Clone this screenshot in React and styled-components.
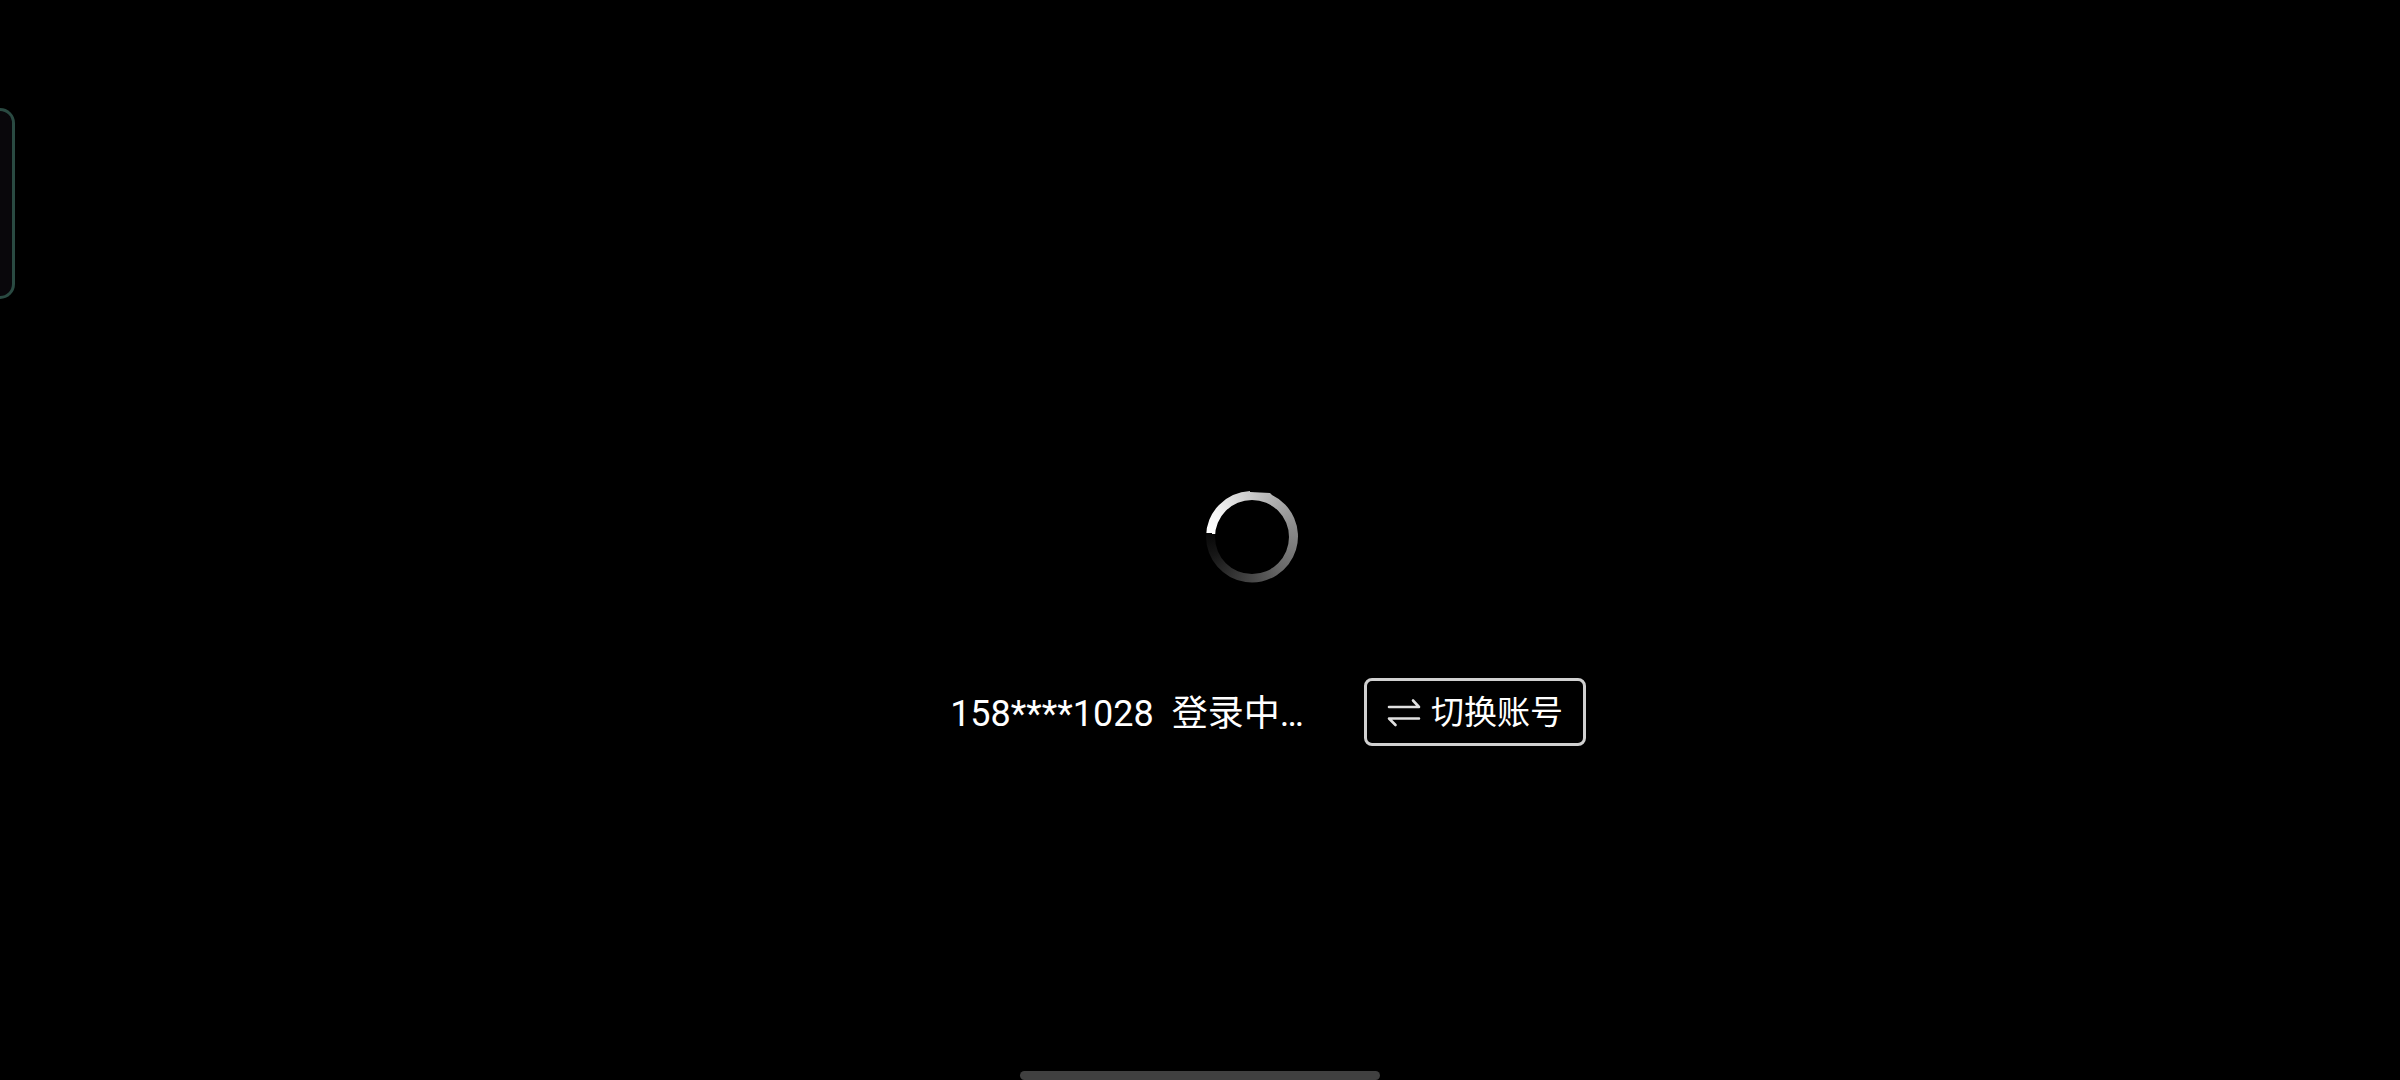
import React from 'react';
import styled, { createGlobalStyle } from 'styled-components';

const GlobalStyle = createGlobalStyle`
  body {
    margin: 0;
    background: #000;
    color: #fff;
    font-family: Roboto, "Noto Sans CJK SC", sans-serif;
  }
`;

const Screen = styled.div`
  position: relative;
  box-sizing: border-box;
  min-height: 100vh;
  display: flex;
  flex-direction: column;
  overflow: hidden;
`;

const SidePanel = styled.div`
  position: absolute;
  top: 108px;
  left: 0;
  box-sizing: border-box;
  width: 15px;
  height: 191px;
  border: 3px solid #2a4a42;
  border-left: none;
  border-radius: 0 15px 15px 0;
  background: #09070b;
`;

const Content = styled.main`
  flex: 1;
  display: flex;
  flex-direction: column;
  align-items: center;
  justify-content: center;
  gap: 95px;
  padding: 166px 0 0 104px;
`;

const Spinner = styled.div`
  width: 92px;
  height: 92px;
  background: conic-gradient(
    from 275deg,
    #fff 0deg,
    #f4f4f4 30deg,
    #c8c8c8 85deg,
    #8c8c8c 160deg,
    #6a6a6a 220deg,
    #3c3c3c 280deg,
    #161616 330deg,
    #080808 360deg
  );
  clip-path: path(evenodd, "M0 46 A46 46 0 0 1 44 0 L44 1 L64 2 L66 4 A46 46 0 1 1 0 46 Z M9 46 a37 37 0 1 0 74 0 a37 37 0 1 0 -74 0 Z");
`;

const LoginRow = styled.div`
  display: flex;
  align-items: center;
  gap: 60px;
  padding-left: 32px;
`;

const Status = styled.p`
  display: flex;
  gap: 18px;
  margin: 0;
  padding-top: 4px;
  font-size: 36px;
  line-height: 48px;
`;

const SwitchButton = styled.button`
  display: flex;
  align-items: center;
  gap: 10px;
  box-sizing: border-box;
  height: 68px;
  padding: 2px 20px 0;
  border: 3px solid #d0d0d0;
  border-radius: 8px;
  background: transparent;
  color: #fff;
  font-family: inherit;
  font-size: 33px;
  line-height: 44px;
  cursor: pointer;
`;

const HomeBar = styled.div`
  align-self: center;
  width: 15%;
  height: 9px;
  border-radius: 5px;
  background: #404040;
`;

const SwitchIcon = () => (
  <svg width="34" height="30" viewBox="0 0 34 30" fill="none" stroke="#e0e0e0" strokeWidth="2.6" strokeLinecap="round" strokeLinejoin="round" aria-hidden="true">
    <path d="M2 9H32L26 2.5" />
    <path d="M32 20.5H2L8.500 27" />
  </svg>
);

const App = () => {
  return (
    <Screen>
      <GlobalStyle />
      <SidePanel />
      <Content>
        <Spinner role="progressbar" aria-label="登录中" />
        <LoginRow>
          <Status>
            <span>158****1028</span>
            <span>登录中…</span>
          </Status>
          <SwitchButton type="button">
            <SwitchIcon />
            切换账号
          </SwitchButton>
        </LoginRow>
      </Content>
      <HomeBar />
    </Screen>
  );
};

export default App;
